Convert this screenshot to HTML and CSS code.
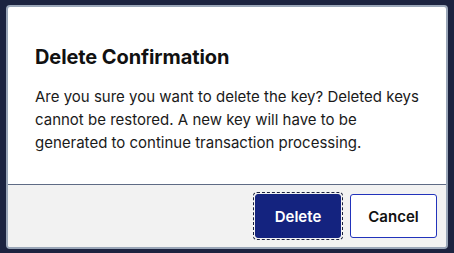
FILE: index.html
```html
<!DOCTYPE html>
<html>
<head>
<meta charset="utf-8">
<link rel="stylesheet" href="styles.css">
</head>
<body>
<div class="dialog">
  <div class="body">
    <h2 class="title">Delete Confirmation</h2>
    <p class="text">Are you sure you want to delete the key? Deleted keys cannot be restored. A new key will have to be generated to continue transaction processing.</p>
  </div>
  <div class="footer">
    <span class="focus"><button class="btn primary">Delete</button></span>
    <button class="btn secondary">Cancel</button>
  </div>
</div>
</body>
</html>
```
FILE: styles.css
```css
html, body { margin: 0; height: 100%; }
body {
  background: #1c2340;
  padding: 5px 6px 4px 6px;
  box-sizing: border-box;
  font-family: Inter, "Noto Sans", sans-serif;
}
.dialog {
  height: 244px;
  box-sizing: border-box;
  border: 2px solid #9aa6b8;
  border-radius: 4px;
  background: #fff;
  display: flex;
  flex-direction: column;
  overflow: hidden;
}
.body {
  flex: 1;
  padding: 0 26px 0 27px;
}
.title {
  margin: 38px 0 0 0;
  font-size: 20px;
  font-weight: 700;
  color: #111;
  line-height: 24px;
  letter-spacing: -0.1px;
}
.text {
  margin: 16px 0 0 0;
  font-size: 15px;
  line-height: 23px;
  color: #1a1a1a;
}
.footer {
  height: 62px;
  border-top: 1px solid #5f6b85;
  background: #f2f2f2;
  display: flex;
  justify-content: flex-end;
  align-items: center;
  gap: 7px;
  padding-right: 9px;
}
.focus {
  display: flex;
  padding: 1px;
  border: 1px dashed #1c2340;
  border-radius: 4px;
}
.btn {
  font-family: Inter, "Noto Sans", sans-serif;
  font-size: 15px;
  font-weight: 600;
  border-radius: 3px;
  height: 44px;
  cursor: pointer;
}
.primary {
  width: 86px;
  background: #14237f;
  color: #fff;
  border: 1px solid #14237f;
}
.secondary {
  width: 87px;
  background: #fff;
  color: #111;
  border: 1px solid #2233bb;
}
```
